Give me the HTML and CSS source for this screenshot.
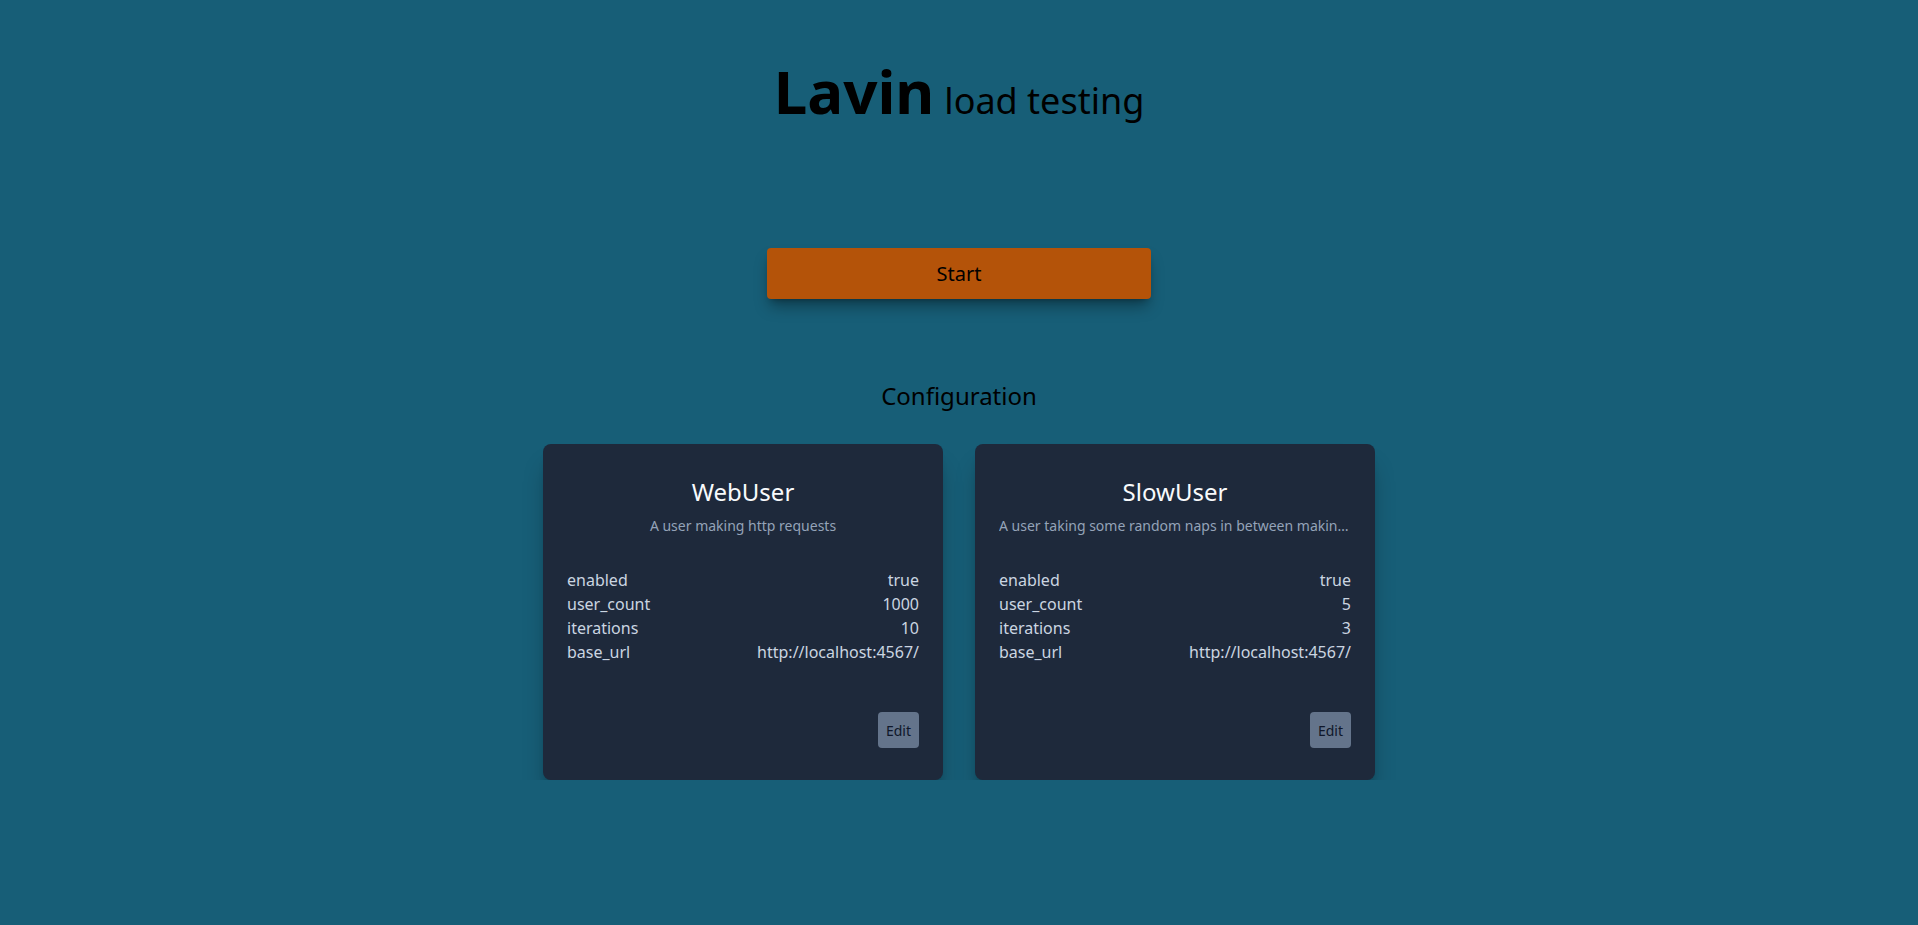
FILE: index.html
```html
<!DOCTYPE html>
<html lang="en">
<head>
<meta charset="utf-8">
<title>Lavin load testing</title>
<link rel="stylesheet" href="styles.css">
</head>
<body>
<main class="page">
  <header class="header">
    <h1 class="brand">Lavin</h1>
    <span class="tagline">load testing</span>
  </header>

  <button class="start-btn" type="button">Start</button>

  <h2 class="section-title">Configuration</h2>

  <section class="cards">
    <article class="card">
      <h3 class="card-title">WebUser</h3>
      <p class="card-desc">A user making http requests</p>
      <dl class="props">
        <div class="prop"><dt>enabled</dt><dd>true</dd></div>
        <div class="prop"><dt>user_count</dt><dd>1000</dd></div>
        <div class="prop"><dt>iterations</dt><dd>10</dd></div>
        <div class="prop"><dt>base_url</dt><dd>http://localhost:4567/</dd></div>
      </dl>
      <div class="card-actions"><button class="edit-btn" type="button">Edit</button></div>
    </article>
    <article class="card">
      <h3 class="card-title">SlowUser</h3>
      <p class="card-desc">A user taking some random naps in between making requests</p>
      <dl class="props">
        <div class="prop"><dt>enabled</dt><dd>true</dd></div>
        <div class="prop"><dt>user_count</dt><dd>5</dd></div>
        <div class="prop"><dt>iterations</dt><dd>3</dd></div>
        <div class="prop"><dt>base_url</dt><dd>http://localhost:4567/</dd></div>
      </dl>
      <div class="card-actions"><button class="edit-btn" type="button">Edit</button></div>
    </article>
  </section>
</main>
</body>
</html>
```

FILE: styles.css
```css
* { box-sizing: border-box; }
html, body { margin: 0; padding: 0; }
body {
  background: #175e77;
  font-family: "Noto Sans", "Open Sans", sans-serif;
  color: #000;
}
.page {
  display: flex;
  flex-direction: column;
  align-items: center;
  padding-top: 61px;
}
.header {
  display: flex;
  align-items: baseline;
  gap: 10px;
}
.brand {
  margin: 0;
  font-size: 60px;
  line-height: 60px;
  font-weight: 700;
}
.tagline {
  font-size: 36px;
  line-height: 40px;
}
.start-btn {
  margin-top: 127px;
  width: 384px;
  height: 51px;
  background: #b45309;
  border: none;
  border-radius: 4px;
  font-family: inherit;
  font-size: 20px;
  color: #000;
  box-shadow: 0 10px 15px -3px rgba(0,0,0,0.35), 0 4px 6px -4px rgba(0,0,0,0.35);
  cursor: pointer;
}
.section-title {
  margin: 81px 0 0;
  font-size: 24px;
  line-height: 32px;
  font-weight: 400;
}
.cards {
  margin-top: 32px;
  display: flex;
  gap: 32px;
}
.card {
  width: 400px;
  height: 336px;
  background: #1e293b;
  border-radius: 8px;
  padding: 32px 24px;
  display: flex;
  flex-direction: column;
  box-shadow: 0 20px 25px -5px rgba(0,0,0,0.3), 0 8px 10px -6px rgba(0,0,0,0.3);
}
.card-title {
  margin: 0;
  text-align: center;
  font-size: 24px;
  line-height: 32px;
  font-weight: 400;
  color: #f8fafc;
}
.card-desc {
  margin: 8px 0 0;
  text-align: center;
  font-size: 14px;
  line-height: 20px;
  color: #94a3b8;
  white-space: nowrap;
  overflow: hidden;
  text-overflow: ellipsis;
}
.props {
  margin: 32px 0 0;
}
.prop {
  display: flex;
  justify-content: space-between;
  font-size: 16px;
  line-height: 24px;
  color: #cbd5e1;
}
.prop dt, .prop dd { margin: 0; }
.card-actions {
  margin-top: auto;
  display: flex;
  justify-content: flex-end;
}
.edit-btn {
  height: 36px;
  padding: 0 8px;
  background: #64748b;
  border: none;
  border-radius: 4px;
  font-family: inherit;
  font-size: 14px;
  color: #0f172a;
  cursor: pointer;
}
```
